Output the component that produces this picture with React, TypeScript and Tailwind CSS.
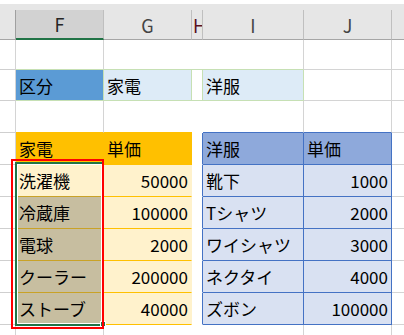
import React from 'react'

type CellProps = {
  w: string
  cls?: string
  right?: boolean
  children?: React.ReactNode
}

function Cell({ w, cls = '', right, children }: CellProps) {
  return (
    <div
      className={`${w} h-full shrink-0 flex items-center overflow-hidden whitespace-nowrap ${
        right ? 'justify-end pr-[3px]' : 'pl-[3px]'
      } ${cls}`}
    >
      {children}
    </div>
  )
}

const kaden = [
  { name: '洗濯機', price: '50000' },
  { name: '冷蔵庫', price: '100000' },
  { name: '電球', price: '2000' },
  { name: 'クーラー', price: '200000' },
  { name: 'ストーブ', price: '40000' },
]

const youfuku = [
  { name: '靴下', price: '1000' },
  { name: 'Tシャツ', price: '2000' },
  { name: 'ワイシャツ', price: '3000' },
  { name: 'ネクタイ', price: '4000' },
  { name: 'ズボン', price: '100000' },
]

export default function App() {
  return (
    <div className="relative w-[404px] h-[335px] overflow-hidden bg-white text-[17px] leading-none text-black font-['Noto_Sans_CJK_JP',sans-serif]">
      {/* 列見出し */}
      <div className="h-[4px]" />
      <div className="h-[6px] bg-[#e6e6e6]" />
      <div className="flex h-[30px] bg-[#e6e6e6] text-[18px] text-[#444]">
        <div className="w-[16px] shrink-0 border-r border-b border-r-[#a0a0a0] border-b-[#a6a6a6]" />
        <div className="w-[88px] shrink-0 flex items-center justify-center bg-[#d2d2d2] border-r border-b-2 border-r-[#bfbfbf] border-b-[#217346] text-[#262626]">F</div>
        <div className="w-[88px] shrink-0 flex items-center justify-center border-r border-b border-r-[#bfbfbf] border-b-[#a6a6a6]">G</div>
        <div className="w-[11px] shrink-0 flex items-center pl-[1px] overflow-hidden border-r border-b border-r-[#bfbfbf] border-b-[#a6a6a6] text-[#5a1020]">H</div>
        <div className="w-[101px] shrink-0 flex items-center justify-center border-r border-b border-r-[#bfbfbf] border-b-[#a6a6a6]">I</div>
        <div className="w-[88px] shrink-0 flex items-center justify-center border-r border-b border-r-[#bfbfbf] border-b-[#a6a6a6]">J</div>
        <div className="flex-1 border-b border-b-[#a6a6a6]" />
      </div>

      {/* 1行目 */}
      <div className="flex h-[30px]">
        <Cell w="w-[16px]" cls="border-r border-b border-r-[#d4d4d4] border-b-[#cfcfcf]" />
        <Cell w="w-[88px]" cls="border-r border-b border-r-[#d4d4d4] border-b-[#c6e0b4]" />
        <Cell w="w-[88px]" cls="border-b border-b-[#c6e0b4]" />
        <Cell w="w-[11px]" cls="border-b border-b-[#c6e0b4]" />
        <Cell w="w-[101px]" cls="border-r border-b border-r-[#d4d4d4] border-b-[#c6e0b4]" />
        <Cell w="w-[88px]" cls="border-r border-b border-r-[#d4d4d4] border-b-[#d4d4d4]" />
        <div className="flex-1 border-b border-b-[#d4d4d4]" />
      </div>

      {/* 2行目 */}
      <div className="flex h-[31px]">
        <Cell w="w-[16px]" cls="border-r border-b border-r-[#d4d4d4] border-b-[#cfcfcf]" />
        <Cell w="w-[88px]" cls="bg-[#5b9bd5] border-r border-b border-[#c6e0b4]">区分</Cell>
        <Cell w="w-[88px]" cls="bg-[#ddebf7] border-r border-b border-[#c6e0b4]">家電</Cell>
        <Cell w="w-[11px]" cls="border-r border-b border-[#c6e0b4]" />
        <Cell w="w-[101px]" cls="bg-[#ddebf7] border-r border-b border-[#c6e0b4]">洋服</Cell>
        <Cell w="w-[88px]" cls="border-r border-b border-[#d4d4d4]" />
        <div className="flex-1 border-b border-b-[#d4d4d4]" />
      </div>

      {/* 3行目 */}
      <div className="flex h-[32px]">
        <Cell w="w-[16px]" cls="border-r border-b border-r-[#d4d4d4] border-b-[#cfcfcf]" />
        <Cell w="w-[88px]" cls="border-r border-b border-r-[#d4d4d4] border-b-[#ffc000]" />
        <Cell w="w-[88px]" cls="border-b border-b-[#ffc000]" />
        <Cell w="w-[11px]" cls="border-b border-b-white" />
        <Cell w="w-[101px]" cls="border-r border-b border-r-[#d4d4d4] border-b-[#4472c4]" />
        <Cell w="w-[88px]" cls="border-r border-b border-r-[#d4d4d4] border-b-[#4472c4]" />
        <div className="flex-1 border-b border-b-[#d4d4d4]" />
      </div>

      {/* テーブル見出し */}
      <div className="flex h-[32px]">
        <Cell w="w-[16px]" cls="border-r border-b border-r-[#d4d4d4] border-b-[#cfcfcf]" />
        <Cell w="w-[88px]" cls="bg-[#ffc000] border-r border-b border-[#ffc000]">家電</Cell>
        <Cell w="w-[88px]" cls="bg-[#ffc000] border-r border-b border-[#ffc000]">単価</Cell>
        <Cell w="w-[11px]" cls="border-r border-b border-r-[#4472c4] border-b-white" />
        <Cell w="w-[101px]" cls="bg-[#8ea9db] border-r border-b border-[#4472c4]">洋服</Cell>
        <Cell w="w-[88px]" cls="bg-[#8ea9db] border-r border-b border-[#4472c4]">単価</Cell>
        <div className="flex-1 border-b border-b-[#d4d4d4]" />
      </div>

      {/* テーブル本体 */}
      {kaden.map((k, i) => (
        <div key={k.name} className="flex h-[32px]">
          <Cell w="w-[16px]" cls="border-r border-b border-r-[#d4d4d4] border-b-[#cfcfcf]" />
          <Cell
            w="w-[88px]"
            cls={`border-r border-b border-r-[#fff2cc] border-b-[#c9a227] ${
              i === 0 ? 'bg-[#fff2cc]' : 'bg-[#c7bea0]'
            }`}
          >
            {k.name}
          </Cell>
          <Cell w="w-[88px]" right cls="bg-[#fff2cc] border-r border-b border-r-[#fff2cc] border-b-[#ffc000]">
            {k.price}
          </Cell>
          <Cell w="w-[11px]" cls="border-r border-b border-r-[#4472c4] border-b-white" />
          <Cell w="w-[101px]" cls="bg-[#d9e1f2] border-r border-b border-[#4472c4]">
            {youfuku[i].name}
          </Cell>
          <Cell w="w-[88px]" right cls="bg-[#d9e1f2] border-r border-b border-[#4472c4]">
            {youfuku[i].price}
          </Cell>
          <div className="flex-1 border-b border-b-[#d4d4d4]" />
        </div>
      ))}

      {/* 10行目 */}
      <div className="flex h-[11px]">
        <Cell w="w-[16px]" cls="border-r border-r-[#d4d4d4]" />
        <Cell w="w-[88px]" cls="border-r border-r-[#d4d4d4]" />
        <Cell w="w-[88px]" />
        <Cell w="w-[11px]" />
        <Cell w="w-[101px]" cls="border-r border-r-[#d4d4d4]" />
        <Cell w="w-[88px]" cls="border-r border-r-[#d4d4d4]" />
        <div className="flex-1" />
      </div>

      {/* 選択範囲 */}
      <div className="absolute left-[15px] top-[162px] w-[89px] h-[164px] border-2 border-[#217346]" />
      <div className="absolute left-[17px] top-[164px] w-[85px] h-[160px] border border-white" />
      <div className="absolute left-[100px] top-[321px] w-[6px] h-[6px] bg-[#217346] border border-white" />

      {/* 赤枠 */}
      <div className="absolute left-[11px] top-[159px] w-[93px] h-[170px] border-2 border-[#ff0000]" />
    </div>
  )
}
